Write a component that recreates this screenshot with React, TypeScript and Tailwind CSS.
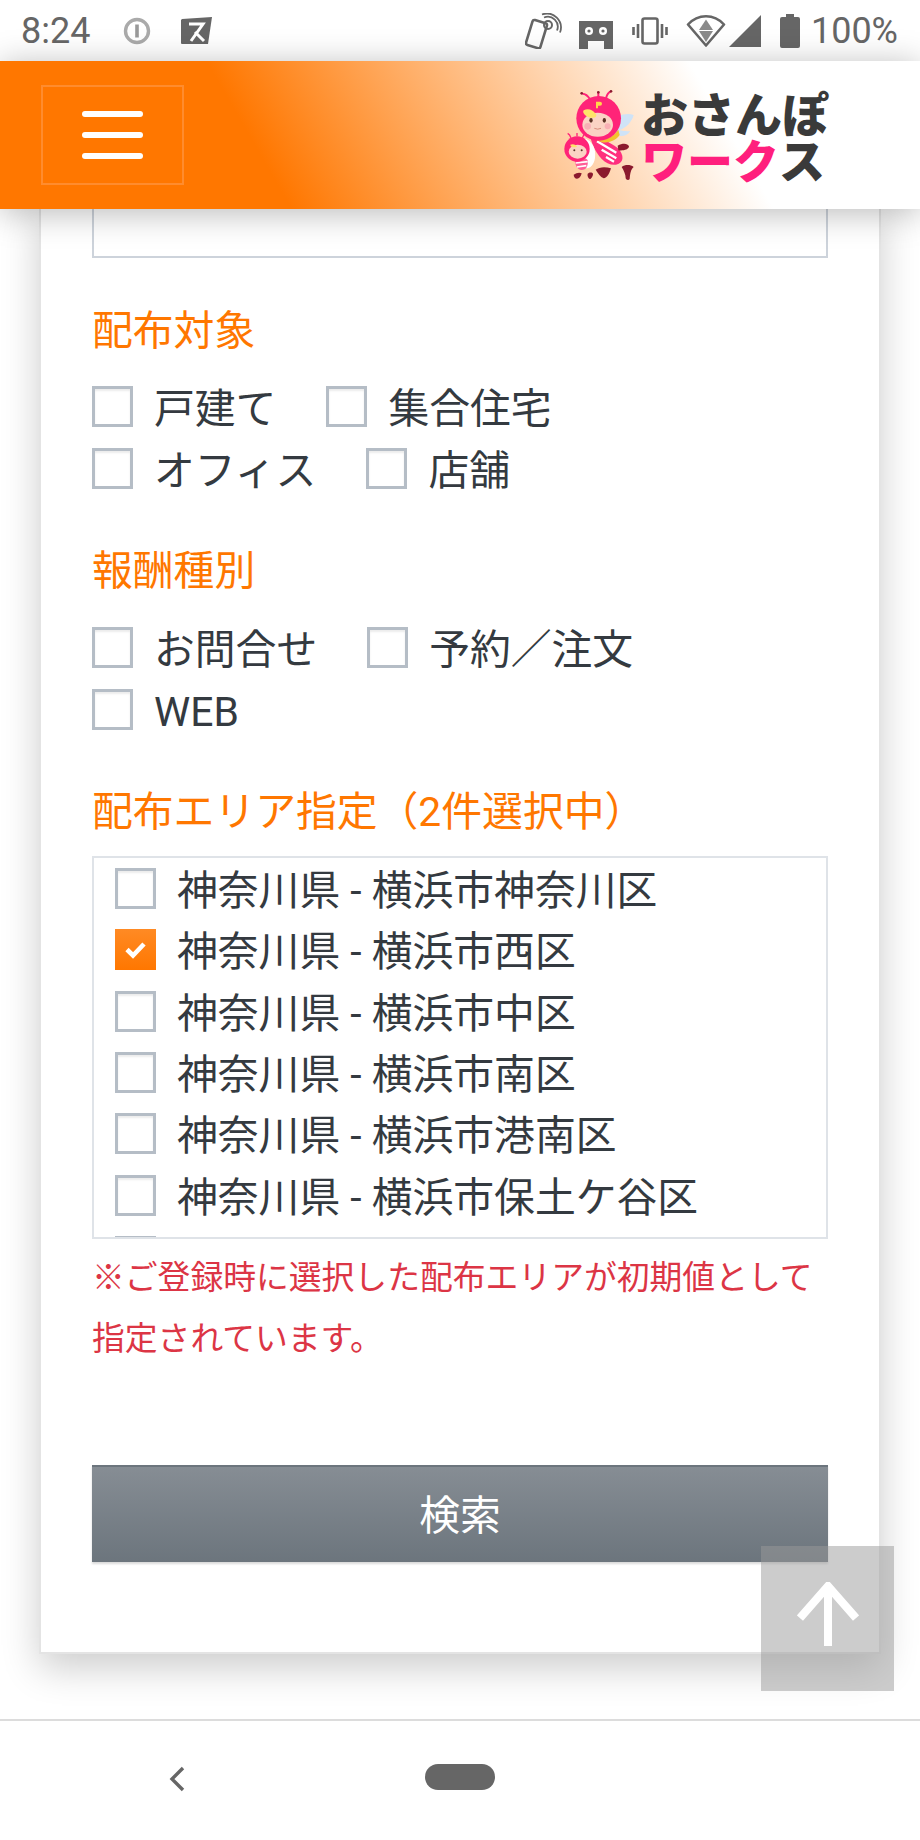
import { ReactNode } from 'react'

function StatusIcons() {
  return (
    <div className="flex items-center">
      {/* 端末をかざすアイコン */}
      <svg width="37" height="36" viewBox="0 0 37 36" fill="none" stroke="#666">
        <rect x="4" y="8" width="15" height="26" rx="2" strokeWidth="2.6" transform="rotate(17 11 21)" />
        <circle cx="23" cy="12" r="4" strokeWidth="2" />
        <path d="M19 4.5a10 10 0 0 1 13 13M17 1.5a14 14 0 0 1 18 18" strokeWidth="1.8" />
      </svg>
      {/* ロボット */}
      <svg width="34" height="28" viewBox="0 0 34 28" className="ml-[17px] mt-[8px]">
        <path d="M0 0h34v28h-9v-8H9v8H0z" fill="#666" />
        <circle cx="10" cy="10" r="4" fill="#fff" />
        <circle cx="24" cy="10" r="4" fill="#fff" />
        <circle cx="10" cy="10" r="1.6" fill="#666" />
        <circle cx="24" cy="10" r="1.6" fill="#666" />
      </svg>
      {/* バイブ */}
      <svg width="36" height="28" viewBox="0 0 36 28" className="ml-[19px]" fill="none" stroke="#666">
        <rect x="10.5" y="1.5" width="15" height="25" rx="2" strokeWidth="2.6" />
        <path d="M6 7v14M1.5 10v8M30 7v14M34.5 10v8" strokeWidth="2.6" />
      </svg>
      {/* Wi-Fi */}
      <svg width="40" height="33" viewBox="0 0 40 33" className="ml-[18px]">
        <path d="M20 31.5 2 10.5C12 -0.5 28 -0.5 38 10.5z" fill="#fff" stroke="#666" strokeWidth="2.6" strokeLinejoin="round" />
        <path d="M20 5.5 27 16H13z" fill="#8a8a8a" />
        <path d="M13 17h14l-7 11z" fill="#8a8a8a" />
      </svg>
      {/* 電波 */}
      <svg width="32" height="32" viewBox="0 0 32 32" className="ml-[3px]">
        <path d="M32 0v32H0z" fill="#666" />
      </svg>
      {/* バッテリー */}
      <svg width="20" height="34" viewBox="0 0 20 34" className="ml-[19px]">
        <path d="M6 0h8v3h4a2 2 0 0 1 2 2v27a2 2 0 0 1-2 2H2a2 2 0 0 1-2-2V5a2 2 0 0 1 2-2h4z" fill="#666" />
      </svg>
      <span className="ml-[11px] text-[36px] leading-none text-[#666]">100%</span>
    </div>
  )
}

function StatusBar() {
  return (
    <div className="flex h-[61px] shrink-0 items-center justify-between bg-white pl-[21px] pr-[22px]">
      <div className="flex items-center">
        <span className="text-[36px] leading-none text-[#666]">8:24</span>
        <svg width="28" height="28" viewBox="0 0 28 28" className="ml-[33px]" fill="none">
          <circle cx="14" cy="14" r="11.5" stroke="#aaa" strokeWidth="3.4" />
          <path d="M14 7.5v13" stroke="#999" strokeWidth="3.6" />
        </svg>
        <svg width="32" height="28" viewBox="0 0 32 28" className="ml-[29px]">
          <path d="M2 2 32 0 28 27H2a1 1 0 0 1-1-1V3z" fill="#666" />
          <path d="M9 7h14L11 24M15 15l9 9" fill="none" stroke="#fff" strokeWidth="3" />
        </svg>
      </div>
      <StatusIcons />
    </div>
  )
}

// ざっくりした蜂のキャラクター。座標はロゴの 3 倍拡大図に合わせている
function Bees() {
  return (
    <svg width="80" height="95" viewBox="70 55 240 285" className="shrink-0">
      <path d="M240 140c20-8 35-8 48-4-6 22-22 38-44 46 14 2 24 4 34 2-10 16-26 18-44 12z" fill="#cfe3f7" />
      <path d="M155 195c30 10 60 20 85 40 20 20 20 45-5 50-30 4-55-25-70-60z" fill="#ff2f7e" />
      <path d="M178 215l58 34M192 240l44 26M205 262l24 14" stroke="#fff" strokeWidth="7" fill="none" />
      <path d="M172 200c20 14 48 10 70-20l4 16c-16 22-48 30-70 14z" fill="#f2c12e" />
      <path d="M240 228c14-8 30-8 34 2 0 10-18 14-32 12z" fill="#8b1a2e" />
      <circle cx="183" cy="146" r="67" fill="#ff2478" />
      <ellipse cx="180" cy="165" rx="46" ry="36" fill="#fbd3c4" />
      <path d="M138 122c14-8 28 0 36 10 6 8-2 14-16 12-12-2-26-14-20-22z" fill="#ffe36a" />
      <circle cx="150" cy="170" r="10" fill="#f8b0b5" />
      <circle cx="210" cy="170" r="9" fill="#f8b0b5" />
      <ellipse cx="160" cy="152" rx="5" ry="7" fill="#5b3326" />
      <ellipse cx="200" cy="152" rx="5" ry="7" fill="#5b3326" />
      <path d="M170 176q10 5 20 0" stroke="#c56a5a" strokeWidth="2" fill="none" />
      <path d="M175 96h12a6 6 0 0 1 0 12h-6v8h-6z" fill="#ffd84a" />
      <path d="M158 90c-6-10-14-18-24-18M182 84V70M205 86c2-8 4-18 14-20" stroke="#ff2478" strokeWidth="6" fill="none" />
      <circle cx="132" cy="71" r="4" fill="#8b1a2e" />
      <circle cx="182" cy="68" r="4" fill="#8b1a2e" />
      <circle cx="220" cy="65" r="4" fill="#8b1a2e" />

      <path d="M140 205c24 10 36 30 32 60-4 28-22 36-40 28 6-30 4-60 8-88z" fill="#fff" />
      <path d="M112 265c16-4 30-2 38 6 2 18-4 30-18 30-14 0-22-18-20-36z" fill="#ff5c96" />
      <path d="M114 280l36-4M118 292l28-4" stroke="#fff" strokeWidth="5" fill="none" />
      <circle cx="118" cy="238" r="38" fill="#ff2478" />
      <ellipse cx="120" cy="246" rx="27" ry="21" fill="#fbd3c4" />
      <path d="M98 225c8-4 18 0 20 6-8 4-20 2-20-6z" fill="#ffe36a" />
      <circle cx="110" cy="242" r="3" fill="#5b3326" />
      <circle cx="132" cy="242" r="3" fill="#5b3326" />
      <path d="M100 205c-2-6-6-12-10-14M118 200v-10M134 205c2-6 4-10 8-12" stroke="#ff2478" strokeWidth="4" fill="none" />
      <path d="M108 315c8-6 18-8 24-4-2 10-8 16-14 16s-10-6-10-12z" fill="#8b1a2e" />
      <path d="M150 312c6-6 14-4 16 0 0 8-6 16-10 16-4-2-8-10-6-16z" fill="#8b1a2e" />
      <path d="M174 300c10-8 28-10 46-4-4 14-12 30-22 30-10-4-18-16-24-26z" fill="#8b1a2e" />
      <path d="M252 292c10-8 26-8 36 0-6 6-10 10-12 36-2 4-10 4-12-2 0-12-6-24-12-34z" fill="#8b1a2e" />
    </svg>
  )
}

function Logo() {
  return (
    <div className="flex items-center">
      <Bees />
      <div className="flex w-[188px] flex-col font-['Noto_Sans_CJK_JP',sans-serif] font-black">
        <span className="h-[47px] whitespace-nowrap text-[47px] leading-[45px] text-[#3a3a3a]">おさんぽ</span>
        <span className="flex h-[45px] whitespace-nowrap text-[46px] leading-[45px] text-[#ff1f7d]">
          <span>ワーク</span>
          <span className="text-[#3a3a3a]">ス</span>
        </span>
      </div>
    </div>
  )
}

function Header() {
  return (
    <header className="relative z-10 flex h-[148px] shrink-0 items-center justify-between bg-[linear-gradient(60deg,#ff7700_29%,#ffffff_77%)] pl-[41px] pr-[91px] shadow-[0_4px_32px_rgba(0,0,0,0.28)]">
      <div className="flex h-[100px] w-[143px] flex-col items-center justify-center gap-[15px] border-2 border-[#ff8c2e]">
        <span className="h-[6px] w-[61px] rounded-full bg-white" />
        <span className="h-[6px] w-[61px] rounded-full bg-white" />
        <span className="h-[6px] w-[61px] rounded-full bg-white" />
      </div>
      <Logo />
    </header>
  )
}

function Box({ checked }: { checked?: boolean }) {
  if (checked) {
    return (
      <span className="h-[41px] w-[41px] shrink-0 bg-[linear-gradient(180deg,#ff8a24,#ff7700)]">
        <svg width="41" height="41" viewBox="0 0 41 41" fill="none">
          <path d="M12 20.5 18 26.5 29 15" stroke="#fff" strokeWidth="4.6" />
        </svg>
      </span>
    )
  }
  return <span className="h-[41px] w-[41px] shrink-0 border-[3px] border-[#b5bdc6] bg-white shadow-[inset_0_2px_2px_rgba(0,0,0,0.08)]" />
}

function Check({ label, className }: { label: string; className?: string }) {
  return (
    <label className={`flex items-center ${className ?? ''}`}>
      <Box />
      <span className="ml-[21px] whitespace-nowrap pt-[7px]">{label}</span>
    </label>
  )
}

function Title({ children, className }: { children: ReactNode; className: string }) {
  return <h3 className={`h-[60px] whitespace-nowrap text-[40.8px] leading-[60px] text-[#ff7700] ${className}`}>{children}</h3>
}

const areas = ['横浜市神奈川区', '横浜市西区', '横浜市中区', '横浜市南区', '横浜市港南区', '横浜市保土ケ谷区']

function SearchForm() {
  return (
    <div className="mx-[39px] -mt-[4px] border-2 border-[#e4e4e4] bg-white px-[51px] pb-[90px] shadow-[0_14px_36px_rgba(0,0,0,0.2)]">
      <div className="h-[51px] border-2 border-t-0 border-[#cdd3db] bg-white" />

      <Title className="mt-[43px]">配布対象</Title>
      <div className="mt-[14px] flex h-[62px] items-center">
        <Check label="戸建て" className="mr-[50px]" />
        <Check label="集合住宅" />
      </div>
      <div className="flex h-[62px] items-center">
        <Check label="オフィス" className="mr-[50px]" />
        <Check label="店舗" />
      </div>

      <Title className="mt-[42px]">報酬種別</Title>
      <div className="mt-[15px] flex h-[62px] items-center">
        <Check label="お問合せ" className="mr-[50px]" />
        <Check label="予約／注文" />
      </div>
      <div className="flex h-[62px] items-center">
        <Check label="WEB" />
      </div>

      <Title className="mt-[42px]">配布エリア指定（2件選択中）</Title>
      <div className="mt-[14px] h-[383px] overflow-hidden border-2 border-[#dfe3e8] pl-[21px]">
        {areas.map((area, i) => (
          <div key={area} className="flex h-[61.3px] items-center">
            <Box checked={i === 1} />
            <span className="ml-[21px] whitespace-nowrap pt-[6px]">神奈川県 - {area}</span>
          </div>
        ))}
        <div className="flex h-[61.3px] items-center">
          <Box />
        </div>
      </div>

      <p className="mt-[9px] text-[32.8px] leading-[61px] text-[#dc3545]">
        ※ご登録時に選択した配布エリアが初期値として
        <br />
        指定されています。
      </p>

      <button className="mt-[95px] block h-[97px] w-full border-t-2 border-t-[#6c757d] bg-[linear-gradient(180deg,#868d94,#6c757d)] pt-[4px] text-center text-[40.8px] text-white shadow-[0_2px_2px_rgba(0,0,0,0.15)]">
        検索
      </button>
    </div>
  )
}

function NavBar() {
  return (
    <div className="relative flex h-[121px] shrink-0 items-center justify-center border-t-2 border-[#dcdcdc] bg-white pb-[7px]">
      <svg width="18" height="26" viewBox="0 0 18 26" className="absolute left-[168px] top-[45px]" fill="none">
        <path d="M15 2 4 13l11 11" stroke="#666" strokeWidth="3.4" />
      </svg>
      <span className="h-[26px] w-[70px] rounded-full bg-[#666]" />
    </div>
  )
}

export default function App() {
  return (
    <div className="relative flex h-[1840px] w-[920px] flex-col overflow-hidden bg-white font-[Roboto,'Noto_Sans_CJK_JP',sans-serif] text-[40.8px] text-[#343a40]">
      <StatusBar />
      <Header />
      <main className="min-h-0 flex-1 overflow-hidden bg-white">
        <SearchForm />
      </main>
      <NavBar />

      {/* ページトップへ戻るボタン */}
      <div className="absolute left-[761px] top-[1546px] flex h-[145px] w-[133px] items-start justify-center bg-[#999]/50 pt-[36px]">
        <svg width="62" height="64" viewBox="0 0 62 64" fill="none">
          <path d="M31 64V4M3 36 31 4l28 32" stroke="#fff" strokeWidth="8" />
        </svg>
      </div>
    </div>
  )
}
